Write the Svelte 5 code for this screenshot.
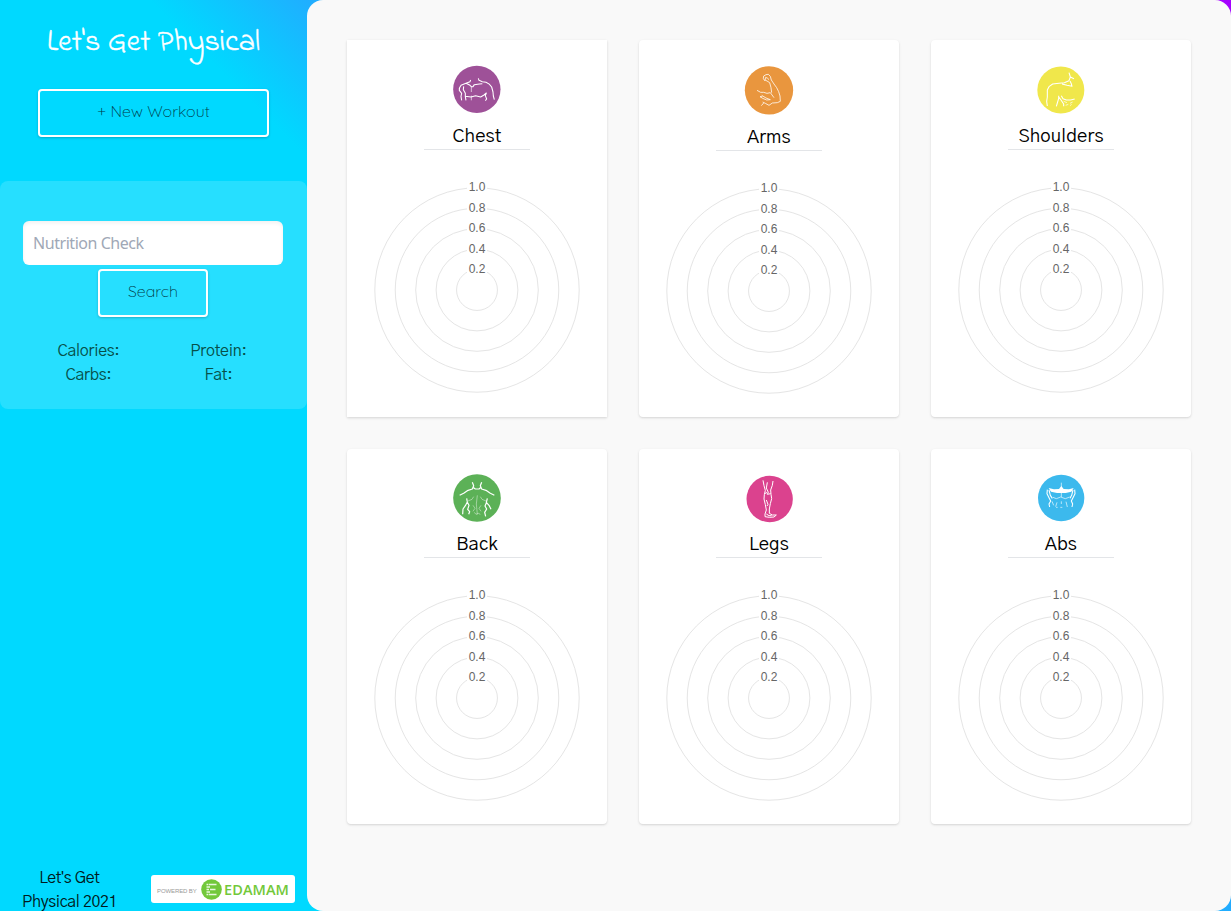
<script>
  const ticks = [1, 0.8, 0.6, 0.4, 0.2];
  const radius = 102.2;
  const groups = [
    {
      name: 'Chest', color: '#9e5198', cx: 179.5, cy: 100, r: 71,
      lines: [
        { d: 'M161 72L159 77L147 82L132 88Q126 95 127 103L134 112L132 121L134 133M140 91L139 101L145 112V122L147 133M147 82L159 88L163 92H168L172 86L187 84L196 83M184 67L186 73L196 77L207 79Q218 83 224 93L228 108L229 120L232 131M145 121L162 123L176 119L191 123L201 117L208 111L205 119L209 129L205 134', w: 3.2 },
        { d: 'M163 92V108M163 119V133', w: 2.5, o: 0.75 }
      ]
    },
    {
      name: 'Arms', color: '#e9963e', cx: 180, cy: 103, r: 72.5,
      lines: [
        { d: 'M168 75L163 68L164 60L171 56L178 55L184 61L187 72L195 84L203 95L209 107L213 120L214 136L205 140L190 141L180 148L169 142L161 138M144 103L155 109H164L174 112L184 110L195 125M188 110L186 95L182 80L174 75L168 72L170 64L176 67L180 71M158 118L171 126L184 131L173 132L161 127L153 122H160M157 149L164 141', w: 2.6, o: 0.9 }
      ]
    },
    {
      name: 'Shoulders', color: '#f0e74b', cx: 179.5, cy: 102, r: 70.5,
      lines: [
        { d: 'M204 50L208 63L219 68M208 63L204 74L190 80L174 82L155 84L144 92L139 102V123L137 136L139 150M183 84L198 88L213 91L211 83L207 75M166 151L169 141L174 124L180 132L188 144V151M173 119V127M181 119L186 128L196 132H209L221 129', w: 3.2 },
        { d: 'M188 136L198 140M194 148L202 145M207 142L215 138M207 149L212 145', w: 2 }
      ]
    },
    {
      name: 'Back', color: '#5cb157', cx: 180, cy: 102, r: 71.5,
      lines: [
        { d: 'M166 55L170 65L166 75L151 80L140 88L128 94M194 55L190 65L194 75L209 80L220 88L232 94M168 70L175 75H186L192 70M149 103L151 114L145 125L138 135L137 151M211 103L208 115L216 124L222 136M151 115L156 124L152 136L158 143L155 151M209 115L204 126L209 135L203 145L206 157', w: 3.6 },
        { d: 'M181 94L178 120L181 151M153 111L165 106L170 98M207 111L195 106L190 98M168 124L174 133L168 142M192 124L186 133L192 142M172 145L177 151L184 148L190 151', w: 2.3, o: 0.55 }
      ]
    },
    {
      name: 'Legs', color: '#db428e', cx: 182, cy: 105, r: 69.5,
      lines: [
        { d: 'M162 49L165 65L169 79L166 92L165 105L169 122L172 138L168 150L168 158L181 160L195 159L202 153L190 153L181 148V135L184 119L188 104L186 91L185 78L190 64L192 51M175 55L172 72L178 85L175 91L185 89M167 89L175 85M172 108L177 121L174 126M172 150L180 155L188 155', w: 3 }
      ]
    },
    {
      name: 'Abs', color: '#3cb9ed', cx: 180.5, cy: 102, r: 69.5,
      lines: [
        { d: 'M139 77L138 89L144 101L149 111L144 120L146 129M144 78L148 94L154 103M221 77L222 89L216 101L211 111L215 120L213 129M216 78L212 94L207 103', w: 3.2 },
        { d: 'M181 56V99M156 100L166 104L179 99L193 104L206 99M153 112L158 124M164 128L168 115M195 113L199 129M181 112V120M165 130H170M178 130H184', w: 2.4, o: 0.8 }
      ],
      fill: 'M143 72L159 76L174 75L181 66L188 75L204 76L218 72L211 83L194 87H168L150 83Z'
    }
  ];
</script>

<div class="app">
  <aside>
    <h1>Let's Get Physical</h1>
    <button class="new">+ New Workout</button>
    <section class="nutrition">
      <input placeholder="Nutrition Check" />
      <button class="search">Search</button>
      <div class="facts">
        <span>Calories:</span><span>Protein:</span>
        <span>Carbs:</span><span>Fat:</span>
      </div>
    </section>
    <footer>
      <p>Let<i>'</i>s Get<br />Physical 2021</p>
      <div class="badge">
        <small>POWERED BY</small>
        <svg width="21" height="21" viewBox="0 0 21 21">
          <circle cx="10.5" cy="10.5" r="10.3" fill="#72c83a" />
          <path d="M8 5.5H15.5M9 10.5H14.5M8 15.5H15.5M5.5 5.5H7.4M5.5 8H9M5.5 10.5H8M5.5 13H9M5.5 15.5H7.4" stroke="#e8f7dd" stroke-width="1.3" fill="none" />
        </svg>
        <b>EDAMAM</b>
      </div>
    </footer>
  </aside>
  <main>
    {#each groups as g}
      <article class:low={g.name === 'Arms'}>
        <svg class="icon" width="50" height="50" viewBox="105 27 150 150">
          <circle cx={g.cx} cy={g.cy} r={g.r} fill={g.color} />
          {#if g.fill}<path d={g.fill} fill="#fff" />{/if}
          {#each g.lines as l}
            <path d={l.d} fill="none" stroke="#fff" stroke-width={l.w} stroke-opacity={l.o ?? 1} stroke-linejoin="round" />
          {/each}
        </svg>
        <h2>{g.name}</h2>
        <svg class="chart" width="210" height="216" viewBox="-105 -111 210 216">
          {#each ticks as t}
            <circle r={radius * t} fill="none" stroke="#e5e5e5" />
          {/each}
          {#each ticks as t}
            <rect x="-10" y={-radius * t - 8} width="20" height="16" fill="#fff" />
            <text x="0" y={Math.round(-radius * t + 3.45)} text-anchor="middle">{t.toFixed(1)}</text>
          {/each}
        </svg>
      </article>
    {/each}
  </main>
</div>

<style>
  :global(body) { margin: 0; }
  * { box-sizing: border-box; }
  .app {
    display: flex;
    height: 911px;
    overflow: hidden;
    font-family: "Gothic A1", "Liberation Sans", Arial, sans-serif;
    background: linear-gradient(45deg, #00d9ff 49.5%, #20aeff 57%, #a600ff 100%);
  }
  aside {
    width: 307px;
    display: flex;
    flex-direction: column;
    align-items: center;
  }
  h1 {
    margin: 21px 0 0;
    height: 68px;
    font: 400 30px/45px "Indie Flower", Lato, cursive;
    letter-spacing: .05px;
    color: #fff;
    -webkit-text-stroke: .4px #fff;
    white-space: nowrap;
  }
  button {
    height: 48px;
    padding: 0 0 4px;
    border: 2px solid #fff;
    border-radius: 4px;
    background: transparent;
    box-shadow: 0 1px 3px rgba(0, 0, 0, .12), 0 1px 2px rgba(0, 0, 0, .1);
    font: 300 16px/24px Quicksand, Lato, sans-serif;
    color: #003845;
  }
  .new { width: 231px; }
  .nutrition {
    width: 100%;
    height: 228px;
    margin-top: 44px;
    padding-top: 40px;
    display: flex;
    flex-direction: column;
    align-items: center;
    border-radius: 8px;
    background: #26dfff;
  }
  input {
    width: 260px;
    height: 44px;
    margin-right: 1px;
    padding: 0 10px;
    border: 0;
    border-radius: 6px;
    background: #fff;
    box-shadow: inset 0 2px 4px rgba(0, 0, 0, .06);
    font: 16px "Noto Sans", sans-serif;
    letter-spacing: -.45px;
  }
  input::placeholder { color: #a0a8b6; opacity: 1; }
  .search { width: 110px; margin: 4px 1px 0 0; }
  .facts {
    width: 260px;
    margin-top: 22px;
    display: grid;
    grid-template-columns: 1fr 1fr;
    text-align: center;
    font-size: 16px;
    line-height: 24px;
    letter-spacing: -.25px;
    color: #065049;
  }
  footer {
    width: 100%;
    margin-top: auto;
    padding: 0 12px 0 22px;
    display: flex;
    justify-content: space-between;
    align-items: flex-start;
    height: 45px;
  }
  p {
    margin: 0;
    width: 95px;
    font-size: 16px;
    line-height: 24px;
    letter-spacing: -.35px;
    text-align: center;
    white-space: nowrap;
    color: #001a20;
  }
  i { font: 16px/1 "Liberation Sans", sans-serif; }
  .badge {
    width: 144px;
    height: 28px;
    margin-top: 9px;
    padding: 0 6px;
    display: flex;
    align-items: center;
    border-radius: 3px;
    background: #fff;
    color: #72c83a;
    white-space: nowrap;
  }
  .badge svg { flex: none; margin: 0 2px 0 auto; }
  small { font: 6px "Liberation Sans", sans-serif; letter-spacing: -.1px; color: #999; padding-top: 4px; }
  b { font: 600 14.5px "Open Sans", sans-serif; letter-spacing: .05px; }
  main {
    flex: 1;
    padding: 40px;
    display: grid;
    grid-template-columns: repeat(3, 260px);
    grid-template-rows: 377px 375px;
    gap: 32px;
    border-radius: 16px;
    background: #f9f9f9;
  }
  article {
    display: flex;
    flex-direction: column;
    align-items: center;
    padding-top: 25px;
    border-radius: 4px;
    background: #fff;
    box-shadow: 0 1px 3px rgba(0, 0, 0, .1), 0 1px 2px rgba(0, 0, 0, .06);
  }
  article:first-child { border-radius: 0; }
  article:nth-child(n + 4) { padding-top: 24px; }
  .icon { flex: none; }
  h2 {
    flex: none;
    width: 106px;
    height: 29px;
    margin: 6px 0 0;
    border-bottom: 1px solid #e3e5e8;
    text-align: center;
    font-size: 18.5px;
    font-weight: 400;
    letter-spacing: .15px;
    line-height: 31px;
    color: #000;
  }
  .low h2 { margin-top: 7px; }
  .chart { flex: none; margin-top: 29px; }
  text { font: 12px "Liberation Sans", Arial, sans-serif; fill: #666; }
</style>
